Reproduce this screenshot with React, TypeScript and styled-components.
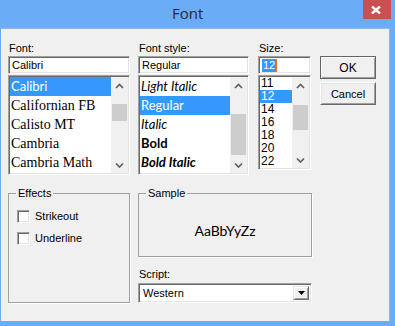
import * as React from 'react'
import styled, { createGlobalStyle, css } from 'styled-components'

const GlobalStyle = createGlobalStyle`
  html, body {
    margin: 0;
    padding: 0;
    background: #6aacf5;
  }
  body {
    width: 395px;
    height: 326px;
    overflow: hidden;
    font-family: 'Liberation Sans', Arial, sans-serif;
  }
`

type ListItem = {
  label: string
  family?: string
  size?: number
  italic?: boolean
  bold?: boolean
}

const fonts: ListItem[] = [
  { label: 'Calibri', family: "Lato, 'Open Sans', sans-serif", size: 13 },
  { label: 'Californian FB', family: "'Liberation Serif', serif", size: 14 },
  { label: 'Calisto MT', family: "'Liberation Serif', serif", size: 14 },
  { label: 'Cambria', family: "'Liberation Serif', serif", size: 14 },
  { label: 'Cambria Math', family: "'Liberation Serif', serif", size: 14 },
]

const styles: ListItem[] = [
  { label: 'Light Italic', italic: true },
  { label: 'Regular' },
  { label: 'Italic', italic: true },
  { label: 'Bold', bold: true },
  { label: 'Bold Italic', bold: true, italic: true },
]

const sizes = ['11', '12', '14', '16', '18', '20', '22']

const Chevron: React.FC<{ down?: boolean }> = ({ down }) => (
  <svg width="9" height="6" viewBox="0 0 9 6">
    <polyline
      points={down ? '1,1.5 4.5,5 8,1.5' : '1,5 4.5,1.5 8,5'}
      fill="none"
      stroke="#606060"
      strokeWidth="1.7"
    />
  </svg>
)

const ScrollBar: React.FC<{ thumbTop: number; thumbHeight: number }> = props => (
  <Scroll>
    <ArrowBox>
      <Chevron />
    </ArrowBox>
    <Track>
      <Thumb $top={props.thumbTop} $height={props.thumbHeight} />
    </Track>
    <ArrowBox>
      <Chevron down />
    </ArrowBox>
  </Scroll>
)

const App: React.FC = () => {
  return (
    <>
      <GlobalStyle />
      <Window>
        <TitleBar>
          <Title>Font</Title>
          <CloseButton>
            <svg width="10" height="8" viewBox="0 0 10 8">
              <path d="M1 0.5 L9 7.5 M9 0.5 L1 7.5" stroke="#fff" strokeWidth="2.4" />
            </svg>
          </CloseButton>
        </TitleBar>
        <Client>
          <TopRow>
            <Column $width={122}>
              <Label>Font:</Label>
              <TextBox>Calibri</TextBox>
              <ListBox $height={100}>
                <Rows>
                  {fonts.map((f, i) => (
                    <FontRow
                      key={i}
                      $selected={i === 0}
                      $family={f.family}
                      $size={f.size}
                    >
                      {f.label}
                    </FontRow>
                  ))}
                </Rows>
                <ScrollBar thumbTop={10} thumbHeight={17} />
              </ListBox>
            </Column>
            <Column $width={111} $gap={8}>
              <Label>Font style:</Label>
              <TextBox>Regular</TextBox>
              <ListBox $height={100}>
                <Rows>
                  {styles.map((s, i) => (
                    <StyleRow
                      key={i}
                      $selected={i === 1}
                      $italic={s.italic}
                      $bold={s.bold}
                    >
                      {s.label}
                    </StyleRow>
                  ))}
                </Rows>
                <ScrollBar thumbTop={20} thumbHeight={41} />
              </ListBox>
            </Column>
            <Column $width={53} $gap={9}>
              <Label>Size:</Label>
              <TextBox>
                <Highlight>12</Highlight>
                <Caret />
              </TextBox>
              <ListBox $height={95}>
                <Rows>
                  {sizes.map((s, i) => (
                    <SizeRow key={i} $selected={i === 1}>
                      {s}
                    </SizeRow>
                  ))}
                </Rows>
                <ScrollBar thumbTop={11} thumbHeight={25} />
              </ListBox>
            </Column>
            <ButtonColumn>
              <PushButton $default>OK</PushButton>
              <PushButton>Cancel</PushButton>
            </ButtonColumn>
          </TopRow>
          <BottomRow>
            <GroupBox $width={122} $height={110}>
              <Legend>Effects</Legend>
              <CheckList>
                <CheckRow>
                  <CheckBox />
                  <CheckLabel>Strikeout</CheckLabel>
                </CheckRow>
                <CheckRow>
                  <CheckBox />
                  <CheckLabel>Underline</CheckLabel>
                </CheckRow>
              </CheckList>
            </GroupBox>
            <RightColumn>
              <GroupBox $width={174} $height={64}>
                <Legend>Sample</Legend>
                <SampleText>AaBbYyZz</SampleText>
              </GroupBox>
              <ScriptLabel>Script:</ScriptLabel>
              <ComboBox>
                <ComboText>Western</ComboText>
                <DropButton>
                  <svg width="7" height="4" viewBox="0 0 7 4">
                    <polygon points="0,0 7,0 3.5,4" fill="#000" />
                  </svg>
                </DropButton>
              </ComboBox>
            </RightColumn>
          </BottomRow>
        </Client>
      </Window>
    </>
  )
}

const Window = styled.div`
  width: 395px;
  height: 326px;
  display: flex;
  flex-direction: column;
  background: #6aacf5;
`
const TitleBar = styled.div`
  height: 28px;
  display: flex;
  align-items: flex-start;
`
const Title = styled.div`
  margin: 3px 0 0 172px;
  font-family: 'Open Sans', 'Noto Sans', sans-serif;
  font-size: 15px;
  line-height: 20px;
  color: #2b2b2b;
`
const CloseButton = styled.div`
  margin-left: auto;
  margin-right: 4px;
  width: 28px;
  height: 19px;
  background: #c75050;
  display: flex;
  align-items: center;
  justify-content: center;
  padding-right: 3px;
  box-sizing: border-box;
`
const Client = styled.div`
  margin-left: 1px;
  width: 389px;
  height: 293px;
  box-sizing: border-box;
  background: #f0f0f0;
  border-top: 1px solid #8fb8e8;
  border-right: 1px solid #8fb8e8;
  padding: 13px 0 0 7px;
  font-size: 11px;
  color: #000;
`
const TopRow = styled.div`
  display: flex;
  align-items: flex-start;
`
const Column = styled.div<{ $width: number; $gap?: number }>`
  width: ${p => p.$width}px;
  margin-left: ${p => p.$gap || 0}px;
  display: flex;
  flex-direction: column;
`
const Label = styled.div`
  height: 13px;
  line-height: 13px;
  margin: 0 0 1px 1px;
`
const sunken = css`
  box-sizing: border-box;
  background: #fff;
  border: 1px solid;
  border-color: #a0a0a0 #fff #fff #a0a0a0;
  box-shadow: inset 1px 1px #696969, inset -1px -1px #e3e3e3;
`
const TextBox = styled.div`
  ${sunken};
  height: 18px;
  padding: 2px 3px 0;
  line-height: 13px;
  display: flex;
  align-items: flex-start;
`
const Highlight = styled.span`
  background: #3399ff;
  color: #fff;
  padding: 0 1px;
`
const Caret = styled.span`
  width: 1px;
  height: 13px;
  background: #e8761c;
`
const ListBox = styled.div<{ $height: number }>`
  ${sunken};
  margin-top: 1px;
  height: ${p => p.$height}px;
  padding: 1px;
  display: flex;
`
const Rows = styled.div`
  flex: 1;
  min-width: 0;
  overflow: hidden;
`
const Row = styled.div<{ $selected?: boolean }>`
  white-space: nowrap;
  padding-left: 1px;
  background: ${p => (p.$selected ? '#3399ff' : 'transparent')};
  color: ${p => (p.$selected ? '#fff' : '#000')};
`
const FontRow = styled(Row)<{ $family?: string; $size?: number }>`
  font-family: ${p => p.$family};
  font-size: ${p => p.$size || 14}px;
  height: 19px;
  line-height: 19px;
`
const StyleRow = styled(Row)<{ $italic?: boolean; $bold?: boolean }>`
  font-family: Lato, 'Open Sans', sans-serif;
  font-size: 13px;
  font-style: ${p => (p.$italic ? 'italic' : 'normal')};
  font-weight: ${p => (p.$bold ? 700 : 400)};
  height: 19px;
  line-height: 19px;
`
const SizeRow = styled(Row)`
  font-size: 12px;
  height: 13px;
  line-height: 13px;
`
const Scroll = styled.div`
  width: 17px;
  display: flex;
  flex-direction: column;
  background: #f0f0f0;
`
const ArrowBox = styled.div`
  height: 17px;
  display: flex;
  align-items: center;
  justify-content: center;
`
const Track = styled.div`
  flex: 1;
  display: flex;
  flex-direction: column;
`
const Thumb = styled.div<{ $top: number; $height: number }>`
  margin: ${p => p.$top}px 1px 0;
  height: ${p => p.$height}px;
  background: #cdcdcd;
`
const ButtonColumn = styled.div`
  margin-left: 9px;
  padding-top: 14px;
  display: flex;
  flex-direction: column;
  gap: 3px;
`
const PushButton = styled.div<{ $default?: boolean }>`
  box-sizing: border-box;
  width: 56px;
  height: 23px;
  display: flex;
  align-items: center;
  justify-content: center;
  background: #f0f0f0;
  font-size: ${p => (p.$default ? '12px' : '11px')};
  border: 1px solid;
  border-color: ${p => (p.$default ? '#646464' : '#fff #696969 #696969 #fff')};
  box-shadow: ${p =>
    p.$default
      ? 'inset 1px 1px #fff, inset -1px -1px #a0a0a0'
      : 'inset 1px 1px #e3e3e3, inset -1px -1px #a0a0a0'};
`
const BottomRow = styled.div`
  margin-top: 18px;
  display: flex;
  align-items: flex-start;
  gap: 8px;
`
const GroupBox = styled.div<{ $width: number; $height: number }>`
  position: relative;
  box-sizing: border-box;
  width: ${p => p.$width}px;
  height: ${p => p.$height}px;
  border: 1px solid #a0a0a0;
  box-shadow: 1px 1px #fff;
`
const Legend = styled.div`
  position: absolute;
  top: -7px;
  left: 7px;
  padding: 0 2px;
  line-height: 13px;
  background: #f0f0f0;
`
const CheckList = styled.div`
  padding: 16px 0 0 8px;
  display: flex;
  flex-direction: column;
  gap: 9px;
`
const CheckRow = styled.div`
  display: flex;
  align-items: center;
  gap: 5px;
`
const CheckBox = styled.div`
  ${sunken};
  width: 13px;
  height: 13px;
`
const CheckLabel = styled.span`
  line-height: 13px;
`
const RightColumn = styled.div`
  display: flex;
  flex-direction: column;
`
const SampleText = styled.div`
  padding-top: 29px;
  text-align: center;
  font-family: Lato, 'Open Sans', sans-serif;
  font-size: 14px;
  line-height: 16px;
`
const ScriptLabel = styled.div`
  margin: 11px 0 2px 1px;
  line-height: 13px;
`
const ComboBox = styled.div`
  ${sunken};
  width: 174px;
  height: 20px;
  padding: 2px;
  display: flex;
  align-items: stretch;
`
const ComboText = styled.div`
  flex: 1;
  padding-left: 2px;
  line-height: 15px;
`
const DropButton = styled.div`
  box-sizing: border-box;
  width: 16px;
  display: flex;
  align-items: center;
  justify-content: center;
  background: #f0f0f0;
  border: 1px solid;
  border-color: #e3e3e3 #696969 #696969 #e3e3e3;
  box-shadow: inset 1px 1px #fff, inset -1px -1px #a0a0a0;
`

export default App
